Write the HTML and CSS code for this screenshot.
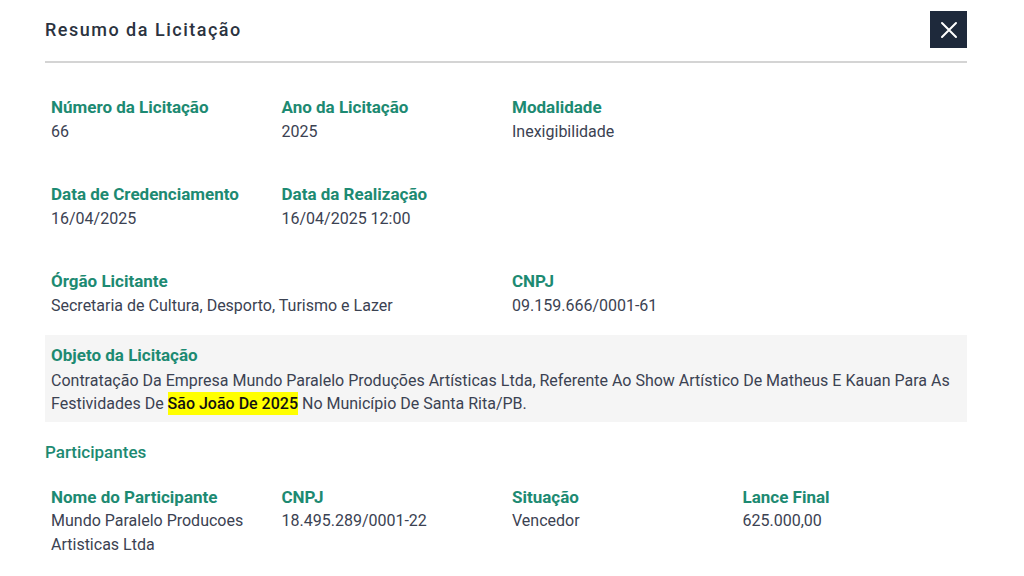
FILE: index.html
```html
<!DOCTYPE html>
<html lang="pt-BR">
<head>
    <meta charset="UTF-8">
    <meta name="viewport" content="width=device-width, initial-scale=1.0">
    <title>Resumo da Licitação</title>
    <link rel="stylesheet" href="styles.css">
</head>
<body>
    <div class="modal">
        <div class="modal-header">
            <h2 class="modal-title">Resumo da Licitação</h2>
            <button class="btn-close" aria-label="Fechar">
                <svg width="18" height="18" viewBox="0 0 18 18">
                    <path d="M2 2 L16 16 M16 2 L2 16" stroke="#fff" stroke-width="2" stroke-linecap="round"/>
                </svg>
            </button>
        </div>

        <div class="info-grid">
            <div class="info-item">
                <div class="label">Número da Licitação</div>
                <div class="value">66</div>
            </div>
            <div class="info-item">
                <div class="label">Ano da Licitação</div>
                <div class="value">2025</div>
            </div>
            <div class="info-item">
                <div class="label">Modalidade</div>
                <div class="value">Inexigibilidade</div>
            </div>
            <div class="info-item"></div>

            <div class="info-item">
                <div class="label">Data de Credenciamento</div>
                <div class="value">16/04/2025</div>
            </div>
            <div class="info-item">
                <div class="label">Data da Realização</div>
                <div class="value">16/04/2025 12:00</div>
            </div>
            <div class="info-item"></div>
            <div class="info-item"></div>

            <div class="info-item span-2">
                <div class="label">Órgão Licitante</div>
                <div class="value">Secretaria de Cultura, Desporto, Turismo e Lazer</div>
            </div>
            <div class="info-item">
                <div class="label">CNPJ</div>
                <div class="value">09.159.666/0001-61</div>
            </div>
        </div>

        <div class="objeto">
            <div class="label">Objeto da Licitação</div>
            <div class="objeto-text">
                <span>Contratação Da Empresa Mundo Paralelo Produções Artísticas Ltda, Referente Ao Show Artístico De Matheus E Kauan Para As</span>
                <span>Festividades De</span> <mark>São João De 2025</mark> <span>No Município De Santa Rita/PB.</span>
            </div>
        </div>

        <h3 class="section-title">Participantes</h3>

        <div class="info-grid participantes">
            <div class="info-item">
                <div class="label">Nome do Participante</div>
                <div class="value">Mundo Paralelo Producoes Artisticas Ltda</div>
            </div>
            <div class="info-item">
                <div class="label">CNPJ</div>
                <div class="value">18.495.289/0001-22</div>
            </div>
            <div class="info-item">
                <div class="label">Situação</div>
                <div class="value">Vencedor</div>
            </div>
            <div class="info-item">
                <div class="label">Lance Final</div>
                <div class="value">625.000,00</div>
            </div>
        </div>
    </div>
</body>
</html>
```

FILE: styles.css
```css
body {
    margin: 0;
    background: #fff;
    font-family: Roboto, "Noto Sans", Arial, sans-serif;
    color: #3b4252;
}

.modal {
    width: 922px;
    margin-left: 45px;
}

.modal-header {
    display: flex;
    justify-content: space-between;
    align-items: center;
    padding-top: 11px;
    padding-bottom: 13px;
    border-bottom: 2px solid #d4d4d4;
}

.modal-title {
    margin: 0;
    font-size: 18px;
    font-weight: 500;
    letter-spacing: 1.5px;
    color: #2b3340;
}

.btn-close {
    width: 37px;
    height: 37px;
    padding: 0;
    border: none;
    background-color: #1e293b;
    display: flex;
    align-items: center;
    justify-content: center;
    cursor: pointer;
}

.info-grid {
    display: grid;
    grid-template-columns: repeat(4, 1fr);
    row-gap: 38px;
    margin-top: 32px;
}

.info-item {
    padding-left: 6px;
}

.span-2 { grid-column: span 2; }

.label {
    font-size: 17px;
    font-weight: 700;
    line-height: 24px;
    color: #1d8a72;
}

.value {
    font-size: 16px;
    line-height: 24px;
    margin-top: 1px;
    color: #3b4252;
}

.objeto {
    margin-top: 17px;
    background-color: #f5f5f5;
    padding: 8px 6px 7px;
}

.objeto-text {
    font-size: 16px;
    line-height: 23px;
    margin-top: 2px;
}

/* highlight drawn taller with shadows so the text box stays the same */
mark {
    background-color: #ffff00;
    box-shadow: 0 -2px 0 #ffff00, 0 2px 0 #ffff00;
    color: #111;
    font-weight: 500;
}

.section-title {
    margin: 18px 0 0;
    font-size: 17px;
    font-weight: 500;
    line-height: 24px;
    color: #1d8a72;
}

.participantes {
    margin-top: 21px;
}

.participantes .value {
    margin-top: 0;
    padding-right: 30px;
}
```
